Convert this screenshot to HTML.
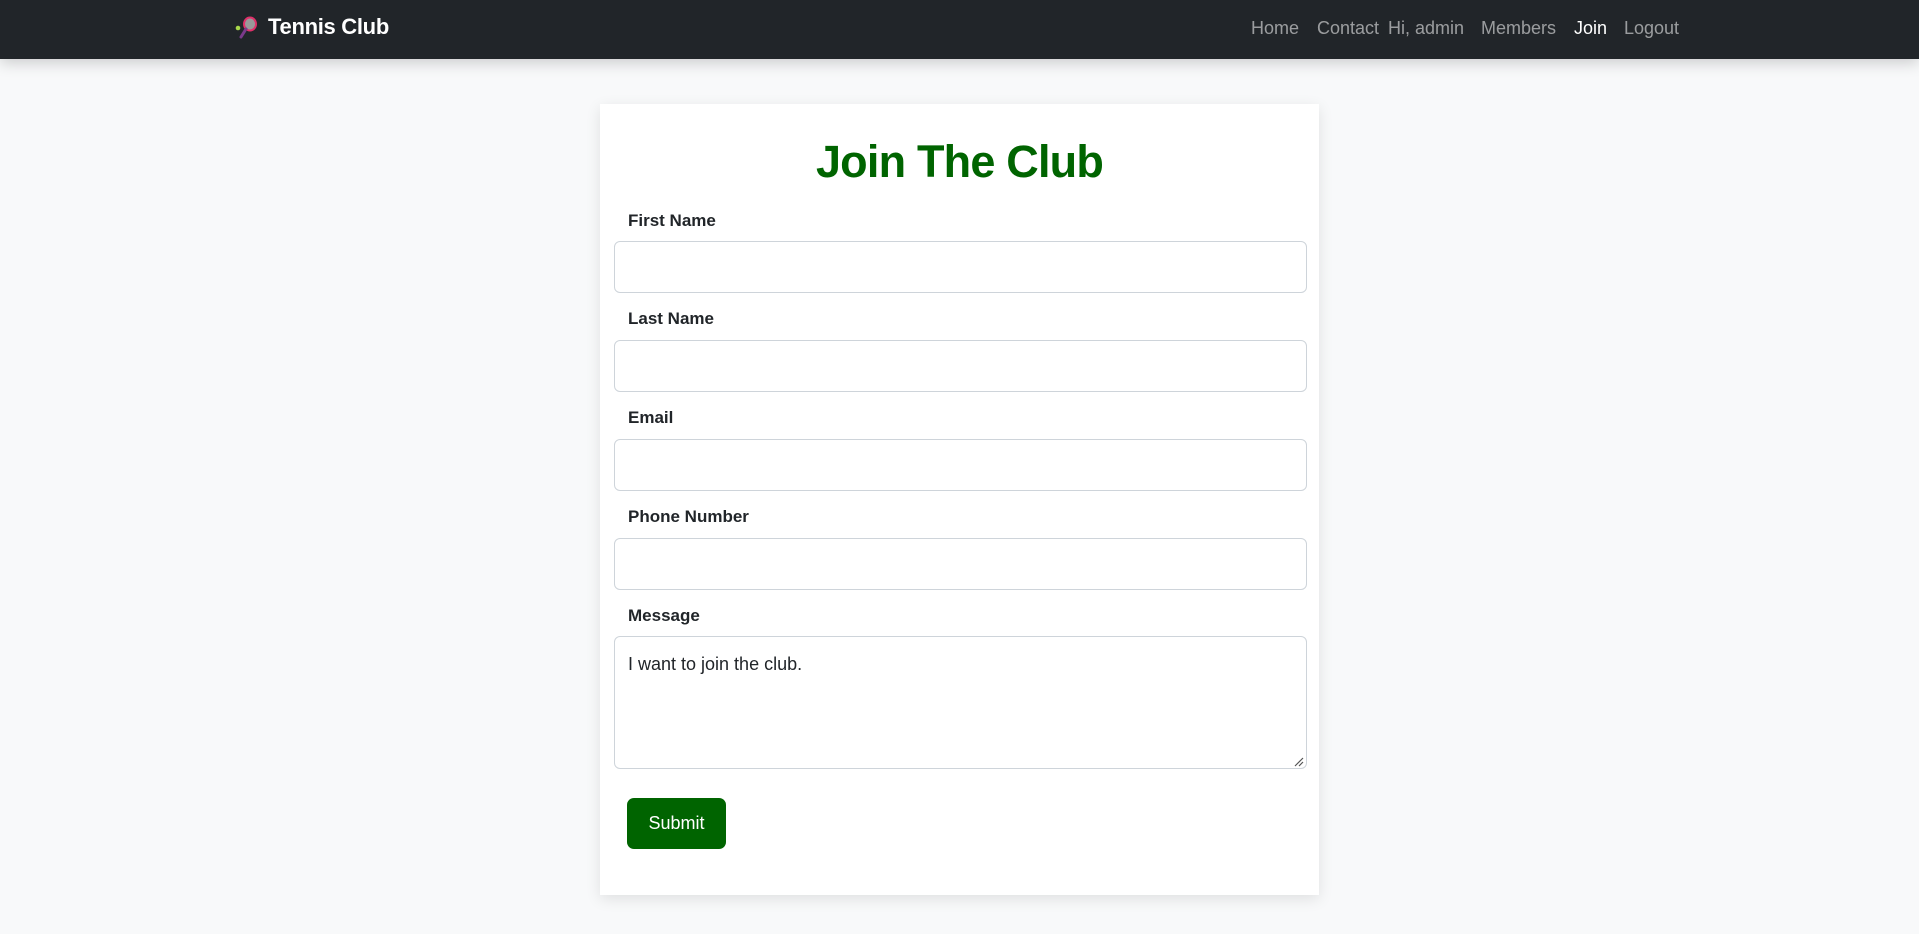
<!DOCTYPE html>
<html><head><meta charset="utf-8"><style>
*{box-sizing:border-box;margin:0;padding:0}
body{width:1919px;height:934px;background:#f8f9fa;font-family:"Liberation Sans",sans-serif;position:relative;overflow:hidden}
.nav{position:absolute;left:0;top:0;width:1919px;height:59px;background:#212529;box-shadow:0 4px 14px rgba(0,0,0,.18)}
.brand{position:absolute;left:268px;top:14px;color:#fff;font-weight:bold;font-size:22px;letter-spacing:-0.3px}
.ico{position:absolute;left:235px;top:16px}
.nl{position:absolute;top:18px;font-size:18px;color:rgba(255,255,255,.55)}
.card{position:absolute;left:600px;top:104px;width:719px;height:791px;background:#fff;box-shadow:0 4px 14px rgba(0,0,0,.1)}
h1{position:absolute;left:600px;width:719px;top:136px;text-align:center;color:#006400;font-size:45px;font-weight:bold;letter-spacing:-0.8px}
.lb{position:absolute;left:628px;font-size:17px;font-weight:bold;color:#212529}
.in{position:absolute;left:614px;width:693px;height:52px;border:1px solid #ced4da;border-radius:6px;background:#fff}
.ta{height:133px}
.tx{position:absolute;left:628px;top:654px;font-size:18px;color:#212529}
.btn{position:absolute;left:627px;top:798px;width:99px;height:51px;background:#006400;border-radius:7px;color:#fff;font-size:18px;text-align:center;line-height:51px}
</style></head><body>
<div class="nav">
<svg class="ico" width="24" height="26" viewBox="0 0 24 26"><circle cx="3" cy="12" r="2.3" fill="#a8d84a"/><ellipse cx="15" cy="8" rx="6" ry="6.5" fill="#999" stroke="#e0306a" stroke-width="2"/><path d="M11 13 L6 21" stroke="#7a3a8a" stroke-width="3" stroke-linecap="round"/></svg>
<div class="brand">Tennis Club</div>
<div class="nl" style="left:1251px">Home</div>
<div class="nl" style="left:1317px">Contact</div>
<div class="nl" style="left:1388px">Hi, admin</div>
<div class="nl" style="left:1481px">Members</div>
<div class="nl" style="left:1574px;color:#fff">Join</div>
<div class="nl" style="left:1624px">Logout</div>
</div>
<div class="card"></div>
<h1>Join The Club</h1>
<div class="lb" style="top:211px">First Name</div>
<div class="in" style="top:241px"></div>
<div class="lb" style="top:309px">Last Name</div>
<div class="in" style="top:340px"></div>
<div class="lb" style="top:408px">Email</div>
<div class="in" style="top:439px"></div>
<div class="lb" style="top:507px">Phone Number</div>
<div class="in" style="top:538px"></div>
<div class="lb" style="top:606px">Message</div>
<div class="in ta" style="top:636px"></div>
<div class="tx">I want to join the club.</div>
<svg style="position:absolute;left:1293px;top:756px" width="11" height="11"><path d="M2 10 L10 2 M6 10 L10 6" stroke="#555" stroke-width="1.2"/></svg>
<div class="btn">Submit</div>
</body></html>
